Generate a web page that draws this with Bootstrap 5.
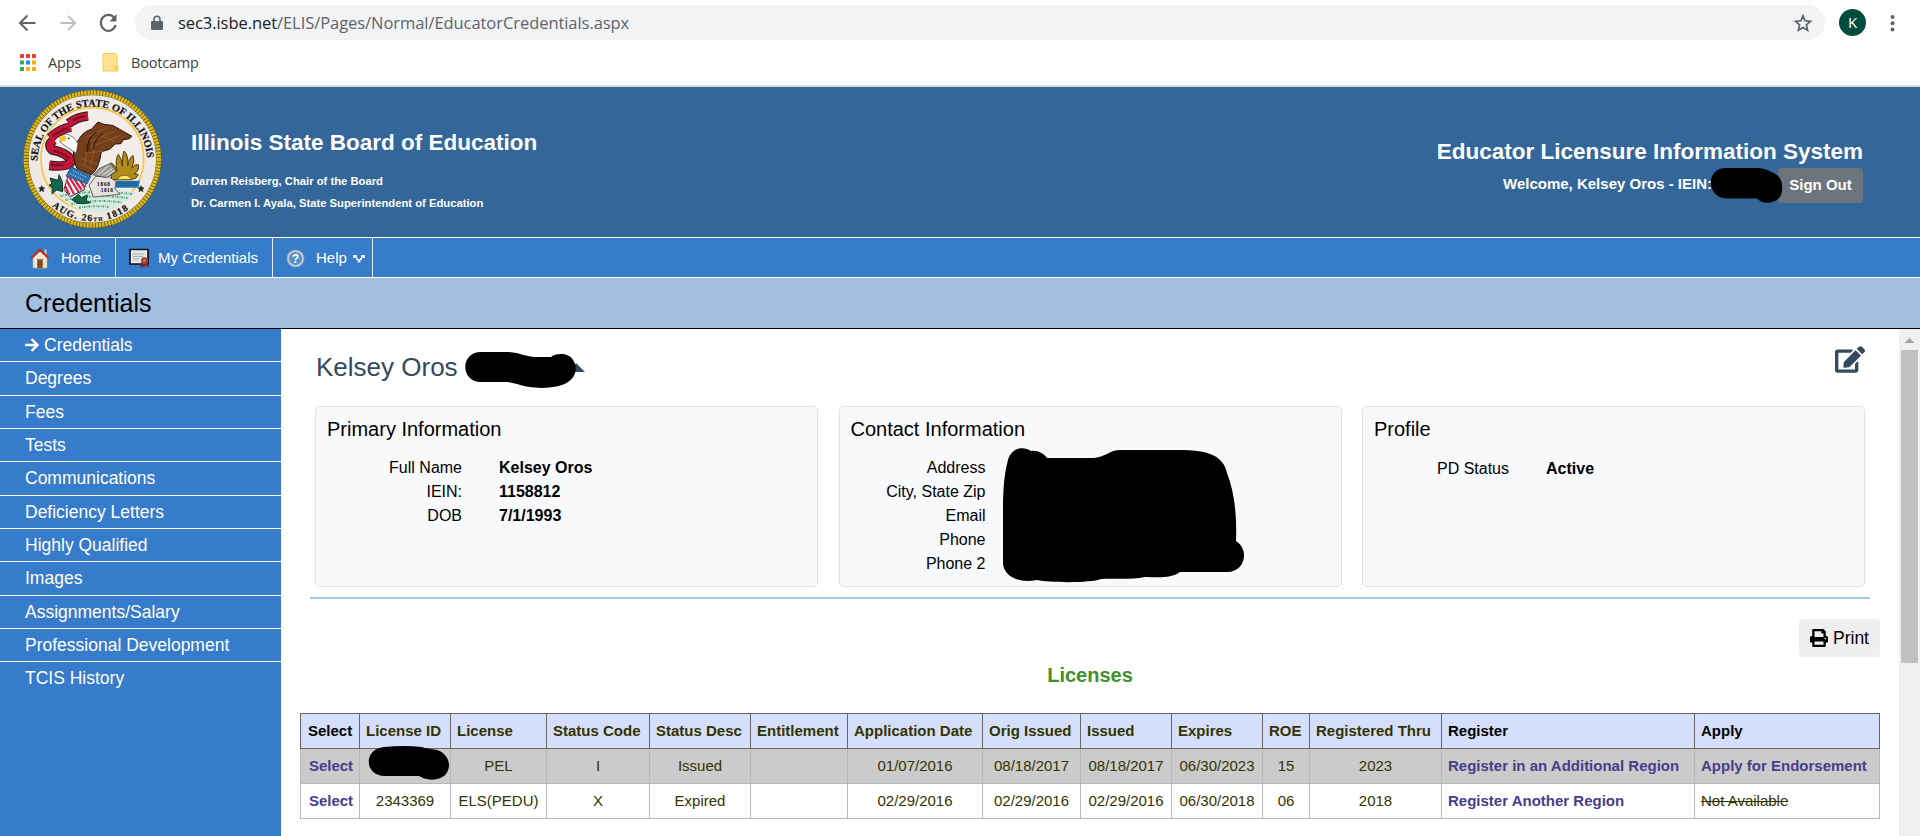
<!DOCTYPE html>
<html lang="en">
<head>
<meta charset="utf-8">
<meta name="viewport" content="width=device-width, initial-scale=1">
<title>Educator Credentials</title>
<link href="https://cdn.jsdelivr.net/npm/bootstrap@5.3.0/dist/css/bootstrap.min.css" rel="stylesheet">
<style>
  body { font-family: "Liberation Sans", Arial, sans-serif; font-size: 15px; line-height: 1.5; color: #000; background: #fff; height: 836px; overflow: hidden; }
  svg { display: block; flex: none; }
  /* browser chrome */
  .chrome { height: 87px; border-bottom: 2px solid #dadce0; font-family: "Open Sans", "Noto Sans", sans-serif; color: #3c4043; }
  .toolbar { height: 45px; padding: 0 22px 0 18px; }
  .omnibox { height: 35px; border-radius: 18px; background: #f1f3f4; margin-left: 17px; padding: 0 12px 0 15px; }
  .url { font-size: 16.5px; letter-spacing: -.06px; color: #5f6368; margin-left: 14px; line-height: 34px; }
  .url b { font-weight: 400; color: #202124; }
  .avatar { width: 27px; height: 27px; background: #004d40; color: #fff; font-size: 15px; margin-left: 14px; }
  .bookmarks { height: 35px; font-size: 14.5px; letter-spacing: -.2px; padding-left: 19px; }
  /* banner */
  .banner { height: 150px; background: #336699; color: #fff; font-weight: 700; padding: 0 57px 0 14px; }
  .banner h1, .banner h2 { font-size: 22.5px; font-weight: 700; margin: 0; line-height: 27px; }
  .agency { padding-top: 42px; margin-left: 22px; font-size: 11.25px; }
  .agency p { margin: 0; line-height: 22px; }
  .system { padding-top: 51px; }
  .signout { background: #6c757d; border: 0; color: #fff; font-weight: 700; font-size: 15px; width: 85px; height: 35px; padding: 0 0 2px; border-radius: 4px; line-height: 33px; }
  .hidden-id { width: 66px; }
  .hidden-id svg { position: absolute; left: -2px; top: -1px; }
  /* menu */
  .menu { height: 41px; background: #377bcb; border-top: 1px solid #fff; border-bottom: 1px solid #fff; color: #fff; }
  .menu a { color: #fff; text-decoration: none; border-right: 1px solid #e4ebf5; height: 39px; padding-top: 1px; }
  .m-home { width: 116px; padding-left: 30px; gap: 11px; }
  .m-cred { width: 157px; padding-left: 13px; gap: 9px; }
  .m-help { width: 100px; padding-left: 13px; gap: 11px; }
  .pagebar { height: 51px; background: #a2bfdf; border-bottom: 1px solid #000; font-size: 25px; line-height: 50px; padding-left: 25px; }
  /* side menu */
  .side { width: 281px; height: 507px; background: #377bcb; flex: none; }
  .side a { color: #fff; text-decoration: none; font-size: 17.5px; height: 33.33px; line-height: 32px; padding-left: 25px; border-bottom: 1px solid #fff; gap: 5px; }
  .side a:last-child { border: 0; }
  .content-pane { height: 507px; overflow: hidden; padding: 0 19px 0 19px; }
  .person { height: 77px; padding: 0 15px 0 16px; color: #34495e; font-size: 26px; }
  .person span { line-height: 30px; margin-top: 23px; }
  .person .masked { width: 122px; height: 40px; margin-top: 21px; margin-left: 6px; }
  .person .edit { margin-top: 17px; }
  .info { height: 181px; border: 1px solid #dee2e6; border-radius: 5px; background: #f8f9fb; padding: 8px 11px; font-size: 16px; width: 503px; position: relative; }
  .info h3 { font-size: 20px; font-weight: 400; line-height: 28px; margin: 0 0 13px; }
  .info dl { margin: 0; display: grid; grid-template-columns: 135px 1fr; column-gap: 37px; grid-auto-rows: 24.1px; line-height: 24px; }
  .info dt { font-weight: 400; text-align: right; }
  .info dd { margin: 0; font-weight: 700; }
  .info .mask { position: absolute; left: 162px; top: 40px; }
  .rule { height: 2px; background: #a6c8e9; margin: 10px 10px 0; }
  .printbtn { background: #efefef; border: 0; border-radius: 4px; width: 81px; height: 38px; font-size: 17.5px; gap: 5px; padding: 0; color: #000; }
  .lic-title { color: #41902b; font-size: 20px; font-weight: 700; text-align: center; line-height: 24px; margin: 6px 0 26px; }
  .grid-table { table-layout: fixed; width: 1580px; border-collapse: collapse; font-size: 15px; color: #333300; position: relative; }
  .grid-table th, .grid-table td { height: 35px; padding: 0 0 0 6px; white-space: nowrap; border: 1px solid #b8b8b8; line-height: 20px; }
  .grid-table th { background: #d5dffb; border-color: #666; }
  .grid-table th:first-child { padding-left: 7px; }
  .grid-table td { text-align: center; padding: 0; }
  .grid-table td:first-child { padding-left: 2px; }
  .grid-table .lnk { color: #483d8b; font-weight: 700; text-decoration: none; }
  .grid-table td:nth-last-child(-n+2) { text-align: left; padding-left: 6px; }
  .grid-table .on td { background: #cbcbcb; }
  .scroller { width: 21px; background: #f0f0f0; flex: none; padding: 9px 2px 0; }
  .scroller i { display: block; height: 313px; background: #c1c1c1; margin-top: 7px; }
</style>
</head>
<body>
<header class="chrome">
  <div class="toolbar d-flex align-items-center">
    <svg width="18" height="18" viewBox="0 0 18 18" fill="none" stroke="#5f6368" stroke-width="2"><path d="M17.500 9H3M9.500 1.500 2 9l7.500 7.500"/></svg>
    <svg class="ms-4" width="17" height="18" viewBox="0 0 18 18" fill="none" stroke="#bcbec1" stroke-width="2"><path d="M.5 9H15M8.500 1.500 16 9l-7.500 7.500"/></svg>
    <svg width="19" height="20" viewBox="0 0 19 20" style="margin-left:22px" fill="none" stroke="#5f6368" stroke-width="2.200"><path d="M15.500 5.200A7.500 8 0 1 0 16.600 12"/><path d="M17.500 1v7.500H10.500z" fill="#5f6368" stroke="none"/></svg>
    <div class="omnibox d-flex align-items-center flex-grow-1">
      <svg width="14" height="16" viewBox="0 0 14 16"><path d="M2 6h10q1 0 1 1v7q0 1-1 1H2q-1 0-1-1V7q0-1 1-1z" fill="#5f6368"/><path d="M4 7V4.500a3 3.200 0 0 1 6 0V7" fill="none" stroke="#5f6368" stroke-width="1.600"/></svg>
      <span class="url flex-grow-1"><b>sec3.isbe.net</b>/ELIS/Pages/Normal/EducatorCredentials.aspx</span>
      <svg width="20" height="20" viewBox="0 0 20 20" fill="none" stroke="#5f6368" stroke-width="1.700"><path d="m10 2.800 2.100 5 5.400.5-4.100 3.600 1.200 5.300-4.600-2.800-4.600 2.800 1.200-5.300-4.100-3.600 5.400-.5z"/></svg>
    </div>
    <span class="avatar rounded-circle d-flex align-items-center justify-content-center">K</span>
    <svg width="20" height="18" viewBox="0 0 20 18" style="margin-left:12px" fill="#5f6368"><circle cx="14.500" cy="3" r="2"/><circle cx="14.500" cy="9.200" r="2"/><circle cx="14.500" cy="15.400" r="2"/></svg>
  </div>
  <div class="bookmarks d-flex align-items-center">
    <svg width="18" height="18" viewBox="0 0 18 18"><path d="M1 0h4v4H1zM7 0h4v4H7zM13 0h4v4h-4z" fill="#ea4335"/><path d="M1 6.500h4v4H1zM1 13h4v4H1z" fill="#34a853"/><path d="M7 6.500h4v4H7z" fill="#1a88f0"/><path d="M13 6.500h4v4h-4zM7 13h4v4H7zM13 13h4v4h-4z" fill="#fbab0c"/></svg>
    <span style="margin-left:11px">Apps</span>
    <svg width="17" height="19" viewBox="0 0 17 19" style="margin-left:21px"><path d="M1 .5h13l1 1V12l1 1v5H1z" fill="#ffe391" stroke="#f2cd55"/><path d="M12 18v-5l2-1 2 1v5z" fill="#f9d45c"/></svg>
    <span style="margin-left:12px">Bootcamp</span>
  </div>
</header>

<section class="banner d-flex">
  <svg width="155" height="148" viewBox="0 6 465 444">
    <defs>
      <path id="arcTop" d="M71 228A164 164 0 0 1 399 228"/>
      <path id="arcLow" d="M91 341A187 187 0 0 0 379 341"/>
    </defs>
    <circle cx="235" cy="222" r="199" fill="#efe9e6" stroke="#6b5a12" stroke-width="16"/>
    <circle cx="235" cy="222" r="199" fill="none" stroke="#dcb91f" stroke-width="14" stroke-dasharray="7 2.500"/>
    <circle cx="235" cy="222" r="154" fill="#f2edeb" stroke="#f5c744" stroke-width="5"/>
    <g font-family="Liberation Serif, serif" font-weight="700" font-size="31" fill="#111" stroke="#111" stroke-width=".6">
      <text><textPath href="#arcTop" textLength="506">SEAL OF THE STATE OF ILLINOIS</textPath></text>
      <text font-size="29"><textPath href="#arcLow" startOffset="32" textLength="248">AUG. 26<tspan font-size="16">TH</tspan> 1818</textPath></text>
    </g>
    <path d="m83 302 3 6 6 1-5 4 2 7-6-4-6 4 2-7-5-4 6-1zM381 302l3 6 6 1-5 4 2 7-6-4-6 4 2-7-5-4 6-1z" fill="#222" stroke="#222" stroke-width="2"/>
    <!-- water, field and sunrise -->
    <path d="M290 287h88l-5 21h-90z" fill="#2576b5"/>
    <path d="M290 294h82M288 301h84" stroke="#174d78" stroke-width="2"/>
    <path d="M130 325q110-30 235-5-40 60-130 62-65-5-105-57z" fill="#d9ebe0"/>
    <path d="M140 333q90-20 215-6M155 345q90-20 190-5M172 357q70-15 150-5M195 368q50-8 90-2" fill="none" stroke="#45a57c" stroke-width="6" stroke-dasharray="5 4 2 3"/>
    <path d="M293 284q-6-29-1-50 12 6 17 25-6-38 4-51 11 14 12 36 0-34 5-46 15 14 11 45 4-24 16-32 7 17-4 38 8-12 20-10 4 18-13 28 8-3 13 3-5 12-22 14z" fill="#b18b1b" stroke="#4e3c0a" stroke-width="3"/>
    <path d="M310 284a23 21 0 0 1 43 0z" fill="#ffe46a" stroke="#84600c" stroke-width="3"/>
    <path d="M225 300l20-26 39 1 22 14-3 23 15 16-80 8z" fill="#e6e1dd" stroke="#67625e" stroke-width="3"/>
    <text x="249" y="304" font-family="Liberation Serif, serif" font-size="16" font-weight="700" textLength="39">1868</text>
    <text x="260" y="321" font-family="Liberation Serif, serif" font-size="16" font-weight="700" textLength="37">1818</text>
    <!-- motto ribbon -->
    <g fill="none" stroke-linejoin="round">
      <path d="M222 93q-32 3-58 22M171 126q-34 5-62 33M120 165q-22 14-5 30 50 10 57 35-12 18-66 11" stroke="#2b2327" stroke-width="29"/>
      <path d="M222 93q-32 3-58 22M171 126q-34 5-62 33M120 165q-22 14-5 30 50 10 57 35-12 18-66 11" stroke="#c51436" stroke-width="22"/>
      <path d="M178 106q18-12 36-12M117 153q22-17 46-23M120 198q36 9 44 24M112 240h36" stroke="#5a0a20" stroke-width="7" stroke-dasharray="5 2"/>
    </g>
    <!-- eagle -->
    <path d="M190 172q12-30 43-40l19-21q17 10 44 10l58 33-8 7-18 3-7 12-17 1-18 16-24 7q-6 50-30 70l-43-19q-15-30-9-72z" fill="#74401c" stroke="#27150b" stroke-width="3"/>
    <path d="M216 157l63-29M217 173l85-34M224 188l95-37M211 205l60-7M202 220l50 18M195 234l46 22M221 198l-12 49M241 195l-13 55M255 149l50 22" stroke="#94592f" stroke-width="3" fill="none"/>
    <path d="M247 142q-30 17-21 54M267 145q-25 15-29 47M230 157q-15 25-9 45" stroke="#291509" stroke-width="3" fill="none"/>
    <path d="M139 153l17-6q23 5 36 28l-5 30-24-16-24-17z" fill="#fff" stroke="#333" stroke-width="2"/>
    <path d="M138 153l19 1-2 13-14 3-4-8z" fill="#ffc516"/><circle cx="164" cy="160" r="2.500"/>
    <path d="M238 270l19-20 34-16 14 27-27 17-29-5z" fill="#9d9b98" stroke="#33302d" stroke-width="2"/><path d="M253 269l30-27M265 271l31-21M278 273l25-18" stroke="#efede9" stroke-width="3"/>
    <!-- shield -->
    <path d="M171 245l51 31-12 39-43 20-17-22z" fill="#fff" stroke="#342c38" stroke-width="3"/>
    <path d="M153 302l13 27M158 286l22 41M165 275l29 46M180 280l23 35M196 282l15 25" stroke="#d5254b" stroke-width="7"/>
    <path d="M171 245l60 28-12 24-63-24z" fill="#2b72af" stroke="#224569" stroke-width="2"/>
    <path d="M177 257l40 20M169 266l43 21" stroke="#e4eef7" stroke-width="3" stroke-dasharray="3 5"/>
    <path d="M108 279l24 7 3-17 10 21 1 30-18-5-14 12 1-17-10-10 9-3zM174 344l19-16 10 10 17-8-3 17 13 6-22 3-18-1z" fill="#14674a" stroke="#10392b" stroke-width="3"/>
  </svg>
  <div class="agency"><h1>Illinois State Board of Education</h1><p style="margin-top:14px">Darren Reisberg, Chair of the Board</p><p>Dr. Carmen I. Ayala, State Superintendent of Education</p></div>
  <div class="system ms-auto text-end">
    <h2>Educator Licensure Information System</h2>
    <div class="d-flex justify-content-end" style="margin-top:3px"><span style="line-height:32px">Welcome, Kelsey Oros - IEIN:</span>
      <span class="hidden-id position-relative"><svg width="74" height="37" viewBox="0 0 74 37"><path d="M15 1H49C57 2 65 6 69 10c5 6 4 18-1 22-6 5-16 5-21-.5H16C-3 31-5 2 15 1z"/></svg></span>
      <button class="signout">Sign Out</button></div>
  </div>
</section>

<nav class="menu d-flex">
  <a class="m-home d-flex align-items-center" href="#"><svg width="20" height="21" viewBox="0 0 20 21"><path d="M3 9l7-7 7 7v11H3z" fill="#eee6dd" stroke="#b5aca4" stroke-width=".7"/><path d="M14.500 1.500h2V7h-2z" fill="#d9d3cc"/><path d="M1.500 10 10 1.800 18.500 10" fill="none" stroke="#b83022" stroke-width="2.300"/><path d="M7 11h6v9H7z" fill="#ad6729"/><path d="M8 12.500h4V20H8z" fill="#81491f"/></svg>Home</a>
  <a class="m-cred d-flex align-items-center" href="#"><svg width="20" height="20" viewBox="0 0 20 20"><path d="M1 1.500h18V16H1z" fill="#f6f0e6" stroke="#111" stroke-width="1.700"/><path d="M3 3.500h14V14H3z" fill="#dce4e8"/><path d="M4 6h11M4 8.500h10M4 11h6" stroke="#a9b2b8"/><path d="m13 13-1.500 7 3-1.500 1 1.500.5-5 2 4.500 2-1-3-6z" fill="#7e231c"/><circle cx="15.500" cy="12.700" r="3.400" fill="#a03b31"/><circle cx="15.500" cy="12.500" r="1.500" fill="#d07862"/></svg>My Credentials</a>
  <a class="m-help d-flex align-items-center" href="#"><svg width="19" height="19" viewBox="0 0 19 19"><circle cx="9.500" cy="9.500" r="8.700" fill="#c5cbd0" stroke="#7994ad" stroke-width=".8"/><circle cx="9.500" cy="9.500" r="6.500" fill="#5792cf"/><text x="9.500" y="13.500" text-anchor="middle" font-size="12" font-weight="700" fill="#fff" font-family="Liberation Sans">?</text></svg><span>Help</span><svg width="12" height="9" viewBox="0 0 12 9" style="margin-left:-5px" fill="#e7edf6"><path d="M0 1h4v3H0zM8 1h4v3H8zM3 4h2v2H3zM7 4h2v2H7zM4.500 5h3v3.500h-3z"/></svg></a>
</nav>
<div class="pagebar">Credentials</div>

<main class="d-flex">
  <aside class="side d-flex flex-column">
    <a class="d-flex align-items-center" href="#"><svg width="14" height="14" viewBox="0 0 14 14" fill="none" stroke="#fff" stroke-width="2.400"><path d="M0 7h12M6.500 1l6 6-6 6"/></svg>Credentials</a>
    <a href="#">Degrees</a><a href="#">Fees</a><a href="#">Tests</a><a href="#">Communications</a><a href="#">Deficiency Letters</a><a href="#">Highly Qualified</a><a href="#">Images</a><a href="#">Assignments/Salary</a><a href="#">Professional Development</a><a href="#">TCIS History</a>
  </aside>
  <div class="content-pane flex-grow-1">
    <div class="person d-flex align-items-start">
      <span>Kelsey Oros</span>
      <svg class="masked" viewBox="0 0 122 40"><path d="M107 22l5-9 9 9z" fill="#34495e"/><path d="M17 2h27c9 0 16 4 26 5h17c4-4 18-5 22 3 5 7 3 17-5 22-12 8-38 7-51 2L44 32H17C-4 32-4 2 17 2z"/></svg>
      <svg class="edit ms-auto" width="30" height="27" viewBox="0 0 576 512" fill="#34495e"><path d="M402.600 83.200l90.200 90.200c3.800 3.800 3.800 10 0 13.800L274.400 405.600l-92.800 10.300c-12.400 1.400-22.900-9.100-21.500-21.500l10.300-92.800L388.800 83.200c3.800-3.800 10-3.800 13.800 0zm162-22.900l-48.800-48.800c-15.200-15.200-39.900-15.200-55.200 0l-35.400 35.400c-3.800 3.800-3.800 10 0 13.800l90.200 90.200c3.800 3.800 10 3.800 13.800 0l35.400-35.400c15.200-15.300 15.200-40 0-55.200zM384 346.200V448H64V128h229.800c3.200 0 6.200-1.300 8.500-3.500l40-40c7.600-7.600 2.200-20.500-8.500-20.500H48C21.500 64 0 85.500 0 112v352c0 26.500 21.500 48 48 48h352c26.500 0 48-21.500 48-48V306.200c0-10.700-12.900-16-20.500-8.500l-40 40c-2.200 2.300-3.500 5.300-3.500 8.500z"/></svg>
    </div>
    <div class="d-flex justify-content-between" style="padding:0 15px">
      <section class="info"><h3>Primary Information</h3><dl><dt>Full Name</dt><dd>Kelsey Oros</dd><dt>IEIN:</dt><dd>1158812</dd><dt>DOB</dt><dd>7/1/1993</dd></dl></section>
      <section class="info"><h3>Contact Information</h3><dl><dt>Address</dt><dd></dd><dt>City, State Zip</dt><dd></dd><dt>Email</dt><dd></dd><dt>Phone</dt><dd></dd><dt>Phone 2</dt><dd></dd></dl>
        <svg class="mask" width="244" height="136" viewBox="0 0 244 136"><path d="M6 13C9 2 20-2 29 4c7-1 13 3 16 7h47c12-1 15-8 27-8h58c26 0 44 4 48 23 7 18 10 40 9 68 14 9 9 31-9 31h-47c-9 7-24 5-35 5-15 3-31 1-44 2-9 4-50 4-64 1C15 137 2 128 1 117V65C1 43 2 28 6 13z"/></svg></section>
      <section class="info"><h3>Profile</h3><dl style="padding-top:1px"><dt>PD Status</dt><dd>Active</dd></dl></section>
    </div>
    <div class="rule"></div>
    <div class="d-flex justify-content-end" style="margin-top:20px"><button class="printbtn d-flex align-items-center justify-content-center"><svg width="18" height="18" viewBox="0 0 512 512"><path d="M448 192V77.250c0-8.490-3.370-16.620-9.370-22.630L393.370 9.370c-6-6-14.140-9.370-22.630-9.370H96C78.330 0 64 14.330 64 32v160c-35.350 0-64 28.650-64 64v112c0 8.840 7.160 16 16 16h48v96c0 17.670 14.330 32 32 32h320c17.670 0 32-14.330 32-32v-96h48c8.840 0 16-7.160 16-16V256c0-35.350-28.650-64-64-64zm-64 256H128v-96h256v96zm0-224H128V64h192v48c0 8.840 7.160 16 16 16h48v96zm48 72c-13.250 0-24-10.750-24-24 0-13.260 10.750-24 24-24s24 10.740 24 24c0 13.250-10.750 24-24 24z"/></svg>Print</button></div>
    <h2 class="lic-title">Licenses</h2>
    <div class="position-relative">
    <table class="grid-table">
      <colgroup><col width="59"><col width="91"><col width="96"><col width="103"><col width="101"><col width="97"><col width="135"><col width="98"><col width="91"><col width="91"><col width="47"><col width="132"><col width="253"><col width="185"></colgroup>
      <thead><tr><th class="text-black">Select</th><th>License ID</th><th>License</th><th>Status Code</th><th>Status Desc</th><th>Entitlement</th><th>Application Date</th><th>Orig Issued</th><th>Issued</th><th>Expires</th><th>ROE</th><th>Registered Thru</th><th class="text-black">Register</th><th class="text-black">Apply</th></tr></thead>
      <tbody>
        <tr class="on"><td><a class="lnk" href="#">Select</a></td><td></td><td>PEL</td><td>I</td><td>Issued</td><td></td><td>01/07/2016</td><td>08/18/2017</td><td>08/18/2017</td><td>06/30/2023</td><td>15</td><td>2023</td><td><a class="lnk" href="#">Register in an Additional Region</a></td><td><a class="lnk" href="#">Apply for Endorsement</a></td></tr>
        <tr><td><a class="lnk" href="#">Select</a></td><td>2343369</td><td>ELS(PEDU)</td><td>X</td><td>Expired</td><td></td><td>02/29/2016</td><td>02/29/2016</td><td>02/29/2016</td><td>06/30/2018</td><td>06</td><td>2018</td><td><a class="lnk" href="#">Register Another Region</a></td><td><s>Not Available</s></td></tr>
      </tbody>
    </table>
    <svg class="position-absolute" style="left:68px;top:32px" width="82" height="36" viewBox="0 0 82 36"><path d="M16 2q20-2 38 0c5 2 12 2 15 3 16 5 16 26 0 29-8 2-14-1-18-3H17C-4 31-5 4 16 2z"/></svg>
    </div>
  </div>
  <div class="scroller"><svg width="17" height="5" viewBox="0 0 17 5"><path d="M3.500 5 8.500 0l5 5z" fill="#a3a3a3"/></svg><i></i></div>
</main>
<script src="https://cdn.jsdelivr.net/npm/bootstrap@5.3.0/dist/js/bootstrap.bundle.min.js"></script>
</body>
</html>
